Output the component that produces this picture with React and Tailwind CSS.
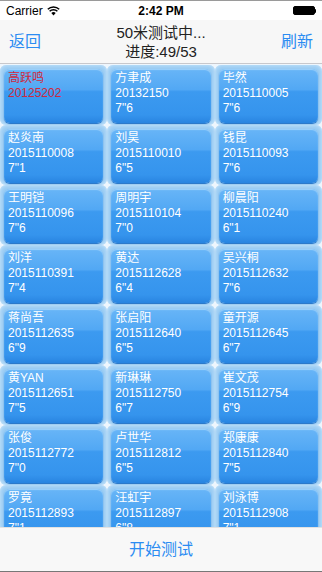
import React from "react";

const rows = [
  [["高跃鸣", "20125202", "", true], ["方聿成", "20132150", '7"6'], ["毕然", "2015110005", '7"6']],
  [["赵炎南", "2015110008", '7"1'], ["刘昊", "2015110010", '6"5'], ["钱昆", "2015110093", '7"6']],
  [["王明铠", "2015110096", '7"6'], ["周明宇", "2015110104", '7"0'], ["柳晨阳", "2015110240", '6"1']],
  [["刘洋", "2015110391", '7"4'], ["黄达", "2015112628", '6"4'], ["吴兴桐", "2015112632", '7"6']],
  [["蒋尚吾", "2015112635", '6"9'], ["张启阳", "2015112640", '6"5'], ["童开源", "2015112645", '6"7']],
  [["黄YAN", "2015112651", '7"5'], ["新琳琳", "2015112750", '6"7'], ["崔文茂", "2015112754", '6"9']],
  [["张俊", "2015112772", '7"0'], ["卢世华", "2015112812", '6"5'], ["郑康康", "2015112840", '7"5']],
  [["罗竟", "2015112893", '7"1'], ["汪虹宇", "2015112897", '6"8'], ["刘泳博", "2015112908", '7"1']],
];

const font = { fontFamily: '"Liberation Sans", "Noto Sans CJK SC", sans-serif' };

function Cell({ name, id, score, red }) {
  return (
    <div className="h-[60px] rounded-[6px] bg-[#98cbf3] shadow-[inset_0_0_4px_#d3eafb] px-[4px] pt-[4px] pb-[2px]">
      <div className="h-full rounded-[6px] bg-[linear-gradient(to_bottom,#68b5f7_0%,#52a8f4_38%,#3c9af0_42%,#3594ed_85%,#2884e0_100%)] shadow-[0_1px_1px_#1f6fc6,inset_0_1px_1px_#9fd2fb] pl-[4px] pt-[2px] text-[12px] leading-[15px]">
        <div className={red ? "text-[#d0283c]" : "text-white"}>{name}</div>
        <div className={red ? "text-[#d0283c]" : "text-white"}>{id}</div>
        {score ? <div className="text-white">{score}</div> : null}
      </div>
    </div>
  );
}

export default function App() {
  return (
    <div className="w-[322px] h-[572px] flex flex-col bg-white overflow-hidden" style={font}>
      <div className="h-[20px] shrink-0 bg-white border-t border-[#9a9a9a] flex items-center justify-between px-[6px] relative">
        <div className="flex items-center gap-[4px] text-[12px] text-black">
          <span>Carrier</span>
          <svg width="13" height="10" viewBox="0 0 13 10">
            <path d="M6.5 9.5 L4.3 7.1 A3.2 3.2 0 0 1 8.7 7.1 Z" fill="#000" />
            <path d="M2.6 5.3 A5.6 5.6 0 0 1 10.4 5.3" stroke="#000" strokeWidth="1.5" fill="none" />
            <path d="M0.8 3.3 A8.2 8.2 0 0 1 12.2 3.3" stroke="#000" strokeWidth="1.5" fill="none" />
          </svg>
        </div>
        <div className="absolute left-0 right-0 text-center text-[12px] font-bold text-black pointer-events-none">2:42 PM</div>
        <div className="flex items-center">
          <div className="w-[22px] h-[9px] rounded-[2px] bg-black border border-black" />
          <div className="w-[1.5px] h-[4px] bg-black rounded-r-[1px]" />
        </div>
      </div>
      <div className="h-[44px] shrink-0 bg-[#f7f7f7] border-b border-[#c8c8cc] flex items-center justify-between px-[9px] relative">
        <span className="text-[16px] text-[#2b8cf2]">返回</span>
        <div className="absolute left-0 right-0 top-[1px] bottom-0 flex flex-col items-center justify-center text-[15px] leading-[19px] text-[#222] pointer-events-none">
          <div>50米测试中...</div>
          <div>进度:49/53</div>
        </div>
        <span className="text-[16px] text-[#2b8cf2]">刷新</span>
      </div>
      <div className="flex-1 overflow-hidden bg-[#eef6fd] pt-[1px]">
        <div className="grid grid-cols-3">
          {rows.flat().map((c, i) => (
            <Cell key={i} name={c[0]} id={c[1]} score={c[2]} red={c[3]} />
          ))}
        </div>
      </div>
      <div className="h-[45px] shrink-0 bg-[#f8f8f8] border-t border-[#e2e2e2] border-b border-b-[#777] flex items-center justify-center">
        <span className="text-[16px] text-[#2b8cf2]">开始测试</span>
      </div>
    </div>
  );
}
